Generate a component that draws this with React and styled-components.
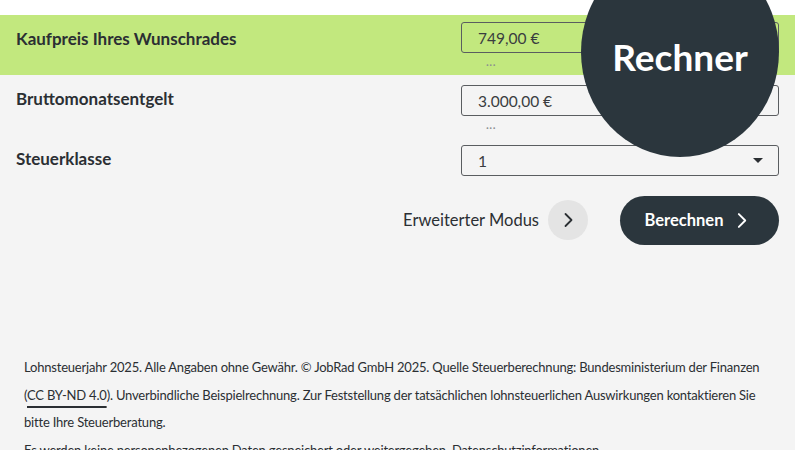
import React from "react";
import styled, { createGlobalStyle } from "styled-components";

const GlobalStyle = createGlobalStyle`
  html, body {
    margin: 0;
    padding: 0;
    background: #ffffff;
    font-family: Lato, "Open Sans", sans-serif;
    color: #2b2f33;
  }
  #root {
    width: 800px;
    height: 450px;
    overflow: hidden;
    position: relative;
  }
`;

const Chevron = ({ size = 16, color = "currentColor", width = 2 }) => (
  <svg width={size} height={size} viewBox="0 0 16 16" fill="none">
    <polyline
      points="5.5,2 11.5,8 5.5,14"
      stroke={color}
      strokeWidth={width}
      strokeLinecap="round"
      strokeLinejoin="round"
    />
  </svg>
);

const Field = ({ label, value, hint, highlight, select, top }) => (
  <Row $highlight={highlight}>
    <Label>{label}</Label>
    <FieldCol $top={top}>
      <Input>
        <span>{value}</span>
        {select && <Caret />}
      </Input>
      {hint && <Hint>···</Hint>}
    </FieldCol>
  </Row>
);

const App = () => {
  return (
    <>
      <GlobalStyle />
      <Page>
        <Form>
          <Field label="Kaufpreis Ihres Wunschrades" value="749,00 €" hint highlight top={7} />
          <Field label="Bruttomonatsentgelt" value="3.000,00 €" hint top={10} />
          <Field label="Steuerklasse" value="1" select top={10} />
          <Actions>
            <ModeLink>
              Erweiterter Modus
              <RoundIcon>
                <Chevron size={16} color="#2b2f33" width={1.8} />
              </RoundIcon>
            </ModeLink>
            <PrimaryButton>
              Berechnen
              <Chevron size={17} color="#ffffff" width={1.8} />
            </PrimaryButton>
          </Actions>
          <Footer>
            <p>
              Lohnsteuerjahr 2025. Alle Angaben ohne Gewähr. © JobRad GmbH 2025. Quelle
              Steuerberechnung: Bundesministerium der Finanzen{" "}
              <NoWrap>
                (<Link>CC BY-ND 4.0</Link>).
              </NoWrap>{" "}
              Unverbindliche Beispielrechnung. Zur Feststellung der tatsächlichen
              lohnsteuerlichen Auswirkungen kontaktieren Sie bitte Ihre Steuerberatung.
            </p>
            <p>
              Es werden keine personenbezogenen Daten gespeichert oder weitergegeben.
              Datenschutzinformationen
            </p>
          </Footer>
        </Form>
        <Badge>Rechner</Badge>
      </Page>
    </>
  );
};

export default App;

const Page = styled.div`
  width: 800px;
  height: 450px;
  padding: 15px 5px 0 0;
  box-sizing: border-box;
  background: #ffffff;
`;

const Form = styled.div`
  background: #f4f4f4;
  height: 100%;
  display: flex;
  flex-direction: column;
`;

const Row = styled.div`
  display: grid;
  grid-template-columns: 1fr 318px;
  align-items: start;
  flex: 0 0 60px;
  padding: 0 16px;
  box-sizing: border-box;
  background: ${(p) => (p.$highlight ? "#c2e87e" : "transparent")};
`;

const Label = styled.div`
  font-weight: 700;
  font-size: 17px;
  line-height: 20px;
  color: #2b2f33;
  margin-top: 14px;
`;

const FieldCol = styled.div`
  display: flex;
  flex-direction: column;
  margin-top: ${(p) => p.$top}px;
`;

const Input = styled.div`
  height: 31px;
  box-sizing: border-box;
  border: 1.5px solid #5a5d60;
  border-radius: 3px;
  display: flex;
  align-items: center;
  justify-content: space-between;
  padding: 0 15px 0 16px;
  font-size: 15.5px;
  color: #3a3d40;
`;

const Caret = styled.span`
  width: 0;
  height: 0;
  border-left: 5px solid transparent;
  border-right: 5px solid transparent;
  border-top: 5px solid #2b2f33;
`;

const Hint = styled.div`
  font-size: 11px;
  line-height: 12px;
  color: #8a8d90;
  padding-left: 25px;
  margin-top: 6px;
  letter-spacing: 0.5px;
`;

const Actions = styled.div`
  display: flex;
  flex: 0 0 50px;
  justify-content: flex-end;
  align-items: center;
  gap: 32px;
  padding: 0 16px 0 0;
`;

const ModeLink = styled.div`
  display: flex;
  align-items: center;
  gap: 9px;
  font-size: 16.5px;
  color: #2b2f33;
`;

const RoundIcon = styled.span`
  width: 40px;
  height: 40px;
  border-radius: 50%;
  background: #e4e4e4;
  display: flex;
  align-items: center;
  justify-content: center;
`;

const PrimaryButton = styled.div`
  width: 159px;
  height: 49px;
  box-sizing: border-box;
  border-radius: 25px;
  background: #2b363d;
  color: #ffffff;
  font-size: 16.5px;
  font-weight: 700;
  display: flex;
  align-items: center;
  justify-content: center;
  gap: 10px;
  padding-right: 4px;
`;

const Footer = styled.div`
  flex: 0 0 auto;
  padding: 109px 15px 0 24px;
  font-size: 13px;
  letter-spacing: -0.2px;
  line-height: 27.5px;
  color: #2b2f33;
  p {
    margin: 0;
  }
`;

const NoWrap = styled.span`
  white-space: nowrap;
`;

const Link = styled.span`
  text-decoration: underline;
  text-decoration-thickness: 2px;
  text-underline-offset: 6px;
`;

const Badge = styled.div`
  position: absolute;
  left: 581px;
  top: -53px;
  width: 198px;
  height: 210px;
  border-radius: 50%;
  background: #2b363d;
  color: #ffffff;
  font-size: 37px;
  font-weight: 700;
  display: flex;
  align-items: flex-end;
  justify-content: center;
  box-sizing: border-box;
  padding-bottom: 78px;
`;
